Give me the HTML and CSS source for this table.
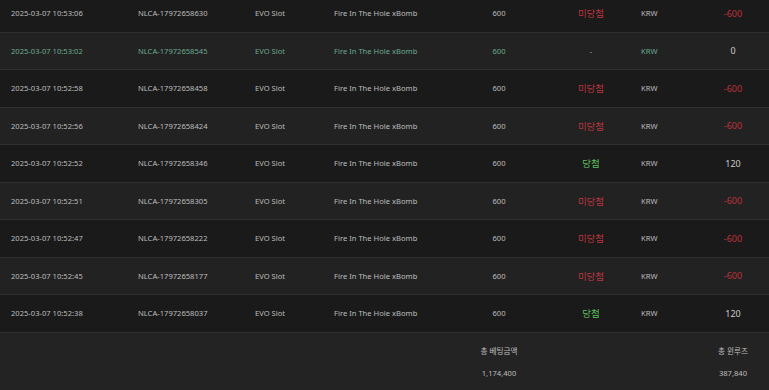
FILE: index.html
```html
<!DOCTYPE html>
<html lang="ko">
<head>
<meta charset="utf-8">
<link rel="stylesheet" href="styles.css">
</head>
<body>
<div class="table">
  <div class="row dark">
    <div class="c l">2025-03-07 10:53:06</div><div class="c l">NLCA-17972658630</div><div class="c l">EVO Slot</div><div class="c l">Fire In The Hole xBomb</div><div class="c m">600</div><div class="c m res lose">미당첨</div><div class="c cur">KRW</div><div class="c m neg">-600</div>
  </div>
  <div class="row light hi">
    <div class="c l">2025-03-07 10:53:02</div><div class="c l">NLCA-17972658545</div><div class="c l">EVO Slot</div><div class="c l">Fire In The Hole xBomb</div><div class="c m">600</div><div class="c m dash">-</div><div class="c cur">KRW</div><div class="c m zero">0</div>
  </div>
  <div class="row dark">
    <div class="c l">2025-03-07 10:52:58</div><div class="c l">NLCA-17972658458</div><div class="c l">EVO Slot</div><div class="c l">Fire In The Hole xBomb</div><div class="c m">600</div><div class="c m res lose">미당첨</div><div class="c cur">KRW</div><div class="c m neg">-600</div>
  </div>
  <div class="row light">
    <div class="c l">2025-03-07 10:52:56</div><div class="c l">NLCA-17972658424</div><div class="c l">EVO Slot</div><div class="c l">Fire In The Hole xBomb</div><div class="c m">600</div><div class="c m res lose">미당첨</div><div class="c cur">KRW</div><div class="c m neg">-600</div>
  </div>
  <div class="row dark">
    <div class="c l">2025-03-07 10:52:52</div><div class="c l">NLCA-17972658346</div><div class="c l">EVO Slot</div><div class="c l">Fire In The Hole xBomb</div><div class="c m">600</div><div class="c m res win">당첨</div><div class="c cur">KRW</div><div class="c m pos">120</div>
  </div>
  <div class="row light">
    <div class="c l">2025-03-07 10:52:51</div><div class="c l">NLCA-17972658305</div><div class="c l">EVO Slot</div><div class="c l">Fire In The Hole xBomb</div><div class="c m">600</div><div class="c m res lose">미당첨</div><div class="c cur">KRW</div><div class="c m neg">-600</div>
  </div>
  <div class="row dark">
    <div class="c l">2025-03-07 10:52:47</div><div class="c l">NLCA-17972658222</div><div class="c l">EVO Slot</div><div class="c l">Fire In The Hole xBomb</div><div class="c m">600</div><div class="c m res lose">미당첨</div><div class="c cur">KRW</div><div class="c m neg">-600</div>
  </div>
  <div class="row light">
    <div class="c l">2025-03-07 10:52:45</div><div class="c l">NLCA-17972658177</div><div class="c l">EVO Slot</div><div class="c l">Fire In The Hole xBomb</div><div class="c m">600</div><div class="c m res lose">미당첨</div><div class="c cur">KRW</div><div class="c m neg">-600</div>
  </div>
  <div class="row dark">
    <div class="c l">2025-03-07 10:52:38</div><div class="c l">NLCA-17972658037</div><div class="c l">EVO Slot</div><div class="c l">Fire In The Hole xBomb</div><div class="c m">600</div><div class="c m res win">당첨</div><div class="c cur">KRW</div><div class="c m pos">120</div>
  </div>
  <div class="foot">
    <div class="c l span4"></div><div class="c m">총 베팅금액</div><div class="c span2"></div><div class="c m">총 윈루즈</div>
    <div class="c l span4"></div><div class="c m">1,174,400</div><div class="c span2"></div><div class="c m">387,840</div>
  </div>
</div>
</body>
</html>
```

FILE: styles.css
```css
html, body {
  margin: 0;
  padding: 0;
  background: #232323;
  height: 390px;
  overflow: hidden;
}
body {
  font-family: "Noto Sans", "Noto Sans CJK KR", sans-serif;
  font-size: 7.6px;
  color: #bdbdbd;
}
.table {
  margin-top: -5px;
}
.row, .foot {
  display: grid;
  grid-template-columns: 127px 117px 79px 134px 84px 100px 56px 72px;
  align-items: center;
}
.row {
  height: 36.5px;
  border-bottom: 1px solid #2f2f2f;
}
.dark { background: #1a1a1a; }
.light { background: #222222; }
.c { white-space: nowrap; }
.l { padding-left: 11px; }
.m { text-align: center; }
.res { font-size: 9.5px; }
.lose { color: #b9343e; }
.win { color: #5cbf5c; }
.neg { color: #bd323b; font-size: 9px; }
.pos, .zero { font-size: 9px; color: #c8c8c8; }
.hi { color: #69a98e; }
.hi .dash { color: #b0b0b0; }
.hi .zero { color: #cacaca; }
.foot {
  grid-template-rows: 22px 22px;
  padding-top: 7px;
}
.foot .c { line-height: 22px; }
.span4 { grid-column: span 4; }
.span2 { grid-column: span 2; }
```
